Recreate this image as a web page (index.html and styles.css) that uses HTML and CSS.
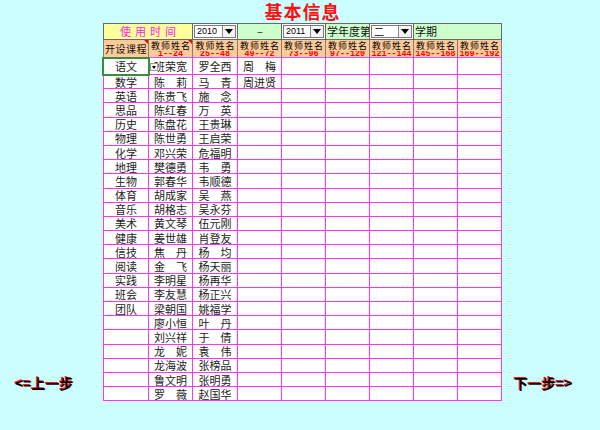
FILE: index.html
```html
<!DOCTYPE html>
<html lang="zh-CN">
<head>
<meta charset="utf-8">
<title>基本信息</title>
<link rel="stylesheet" href="styles.css">
</head>
<body>
<div class="page">
  <div class="side side-left"><span class="nav">&lt;=上一步</span></div>
  <div class="main">
    <h1 class="title">基本信息</h1>
    <div class="sheet">
      <div class="row top">
        <div class="yellow span2">使用时间</div>
        <div class="dd"><span class="ddbox"><span class="ddval">2010</span><span class="ddbtn"></span></span></div>
        <div class="green center">–</div>
        <div class="dd"><span class="ddbox"><span class="ddval">2011</span><span class="ddbtn"></span></span></div>
        <div class="green">学年度第</div>
        <div class="dd"><span class="ddbox"><span class="ddval cjk">二</span><span class="ddbtn"></span></span></div>
        <div class="green span2">学期</div>
      </div>
      <div class="row head">
        <div class="hc tri">开设课程</div>
        <div class="ht tri"><span>教师姓名</span><b>1--24</b></div>
        <div class="ht"><span>教师姓名</span><b>25--48</b></div>
        <div class="ht"><span>教师姓名</span><b>49--72</b></div>
        <div class="ht"><span>教师姓名</span><b>73--96</b></div>
        <div class="ht"><span>教师姓名</span><b>97--120</b></div>
        <div class="ht"><span>教师姓名</span><b>121--144</b></div>
        <div class="ht"><span>教师姓名</span><b>145--168</b></div>
        <div class="ht"><span>教师姓名</span><b>169--192</b></div>
      </div>
      <div class="row"><i class="sel">语文</i><i class="hasdd"><span class="minidd"></span>班荣宽</i><i>罗全西</i><i>周　梅</i><i></i><i></i><i></i><i></i><i></i></div>
      <div class="row"><i>数学</i><i>陈　莉</i><i>马　青</i><i>周进贤</i><i></i><i></i><i></i><i></i><i></i></div>
      <div class="row"><i>英语</i><i>陈贵飞</i><i>施　念</i><i></i><i></i><i></i><i></i><i></i><i></i></div>
      <div class="row"><i>思品</i><i>陈红春</i><i>万　英</i><i></i><i></i><i></i><i></i><i></i><i></i></div>
      <div class="row"><i>历史</i><i>陈盘花</i><i>王贵琳</i><i></i><i></i><i></i><i></i><i></i><i></i></div>
      <div class="row"><i>物理</i><i>陈世勇</i><i>王启荣</i><i></i><i></i><i></i><i></i><i></i><i></i></div>
      <div class="row"><i>化学</i><i>邓兴荣</i><i>危福明</i><i></i><i></i><i></i><i></i><i></i><i></i></div>
      <div class="row"><i>地理</i><i>樊德勇</i><i>韦　勇</i><i></i><i></i><i></i><i></i><i></i><i></i></div>
      <div class="row"><i>生物</i><i>郭春华</i><i>韦顺德</i><i></i><i></i><i></i><i></i><i></i><i></i></div>
      <div class="row"><i>体育</i><i>胡成家</i><i>吴　燕</i><i></i><i></i><i></i><i></i><i></i><i></i></div>
      <div class="row"><i>音乐</i><i>胡格志</i><i>吴永芬</i><i></i><i></i><i></i><i></i><i></i><i></i></div>
      <div class="row"><i>美术</i><i>黄文琴</i><i>伍元刚</i><i></i><i></i><i></i><i></i><i></i><i></i></div>
      <div class="row"><i>健康</i><i>姜世雄</i><i>肖登友</i><i></i><i></i><i></i><i></i><i></i><i></i></div>
      <div class="row"><i>信技</i><i>焦　丹</i><i>杨　均</i><i></i><i></i><i></i><i></i><i></i><i></i></div>
      <div class="row"><i>阅读</i><i>金　飞</i><i>杨天丽</i><i></i><i></i><i></i><i></i><i></i><i></i></div>
      <div class="row"><i>实践</i><i>李明星</i><i>杨再华</i><i></i><i></i><i></i><i></i><i></i><i></i></div>
      <div class="row"><i>班会</i><i>李友慧</i><i>杨正兴</i><i></i><i></i><i></i><i></i><i></i><i></i></div>
      <div class="row"><i>团队</i><i>梁朝国</i><i>姚福学</i><i></i><i></i><i></i><i></i><i></i><i></i></div>
      <div class="row"><i></i><i>廖小恒</i><i>叶　丹</i><i></i><i></i><i></i><i></i><i></i><i></i></div>
      <div class="row"><i></i><i>刘兴祥</i><i>于　倩</i><i></i><i></i><i></i><i></i><i></i><i></i></div>
      <div class="row"><i></i><i>龙　妮</i><i>袁　伟</i><i></i><i></i><i></i><i></i><i></i><i></i></div>
      <div class="row"><i></i><i>龙海波</i><i>张榜品</i><i></i><i></i><i></i><i></i><i></i><i></i></div>
      <div class="row"><i></i><i>鲁文明</i><i>张明勇</i><i></i><i></i><i></i><i></i><i></i><i></i></div>
      <div class="row"><i></i><i>罗　薇</i><i>赵国华</i><i></i><i></i><i></i><i></i><i></i><i></i></div>
    </div>
  </div>
  <div class="side side-right"><span class="nav">下一步=&gt;</span></div>
</div>
</body>
</html>
```

FILE: styles.css
```css
html, body {
  margin: 0;
  padding: 0;
  background: #ccffff;
}

body {
  font-family: "Noto Sans CJK SC", "Liberation Sans", sans-serif;
  width: 600px;
  height: 430px;
  overflow: hidden;
}

.page {
  display: grid;
  grid-template-columns: 103px 399px 1fr;
  height: 430px;
}

.side {
  display: flex;
  flex-direction: column;
  justify-content: flex-end;
  padding-bottom: 39px;
}

.side-left {
  padding-left: 15px;
}

.side-right {
  padding-left: 12px;
}

.nav {
  font-size: 14px;
  line-height: 16px;
  font-weight: bold;
  color: #000;
  text-shadow: -1px -1px 0 #ff1a1a;
}

.main {
  display: flex;
  flex-direction: column;
}

.title {
  margin: 0;
  height: 23px;
  padding-top: 1px;
  box-sizing: border-box;
  line-height: 21px;
  text-align: center;
  font-size: 18px;
  font-weight: bold;
  color: #ff1010;
  letter-spacing: 1px;
}

.sheet {
  display: grid;
  grid-template-columns: 46px 44px 45px repeat(6, 44px);
  grid-template-rows: 17px 18px 17px repeat(23, 14.2px);
}

.row {
  display: contents;
}

.row > * {
  box-sizing: border-box;
  position: relative;
  display: flex;
  align-items: center;
  justify-content: center;
  overflow: hidden;
  white-space: nowrap;
  font-style: normal;
}

/* top row */
.top > * {
  border-top: 1px solid #6a6a6a;
  border-right: 1px solid #6a6a6a;
  border-bottom: 1px solid #6a6a6a;
  font-size: 11px;
  line-height: 13px;
  color: #111;
}

.top > *:first-child {
  border-left: 1px solid #6a6a6a;
}

.span2 {
  grid-column: span 2;
}

.yellow {
  background: #ffff99;
  color: #ff22ee !important;
  letter-spacing: 4px;
  padding-left: 4px;
}

.green {
  background: #ccffcc;
  justify-content: flex-start !important;
  padding-left: 1px;
}

.green.center {
  justify-content: center !important;
}

.dd {
  background: #ffffff;
  padding: 0 1px;
}

.ddbox {
  flex: 1;
  height: 13px;
  box-sizing: border-box;
  border: 1px solid #7a7a7a;
  background: #fff;
  display: flex;
}

.ddval {
  flex: 1;
  font-family: "Liberation Sans", sans-serif;
  font-size: 9px;
  line-height: 11px;
  padding-left: 2px;
  color: #000;
}

.ddval.cjk {
  font-family: "Noto Sans CJK SC", sans-serif;
  font-size: 10px;
}

.ddbtn {
  width: 12px;
  border-left: 1px solid #8a8a8a;
  background: #f4f4f4;
  display: flex;
  align-items: center;
  justify-content: center;
}

.ddbtn::after {
  content: "";
  border-left: 4px solid transparent;
  border-right: 4px solid transparent;
  border-top: 5px solid #000;
}

/* header row */
.head > * {
  background: #ffcc99;
  border-right: 1px solid #7f7f7f;
  border-bottom: 1px solid #ff44ff;
}

.head > *:first-child {
  border-left: 1px solid #7f7f7f;
}

.hc {
  font-size: 10px;
  line-height: 12px;
  color: #111;
  letter-spacing: 0.5px;
}

.ht {
  flex-direction: column;
  justify-content: flex-start !important;
}

.ht span {
  flex-shrink: 0;
  font-size: 9px;
  line-height: 9px;
  height: 9px;
  letter-spacing: 1px;
  padding-left: 1px;
  color: #000;
  margin-top: 1px;
}

.ht b {
  flex-shrink: 0;
  display: block;
  overflow: hidden;
  font-family: "Liberation Mono", monospace;
  font-size: 8.4px;
  line-height: 6px;
  height: 6px;
  font-weight: bold;
  color: #ff0000;
  margin-top: 1px;
}

.tri::after {
  content: "";
  position: absolute;
  top: 0;
  right: 0;
  border-left: 4px solid transparent;
  border-top: 4px solid #ff0000;
}

/* data rows */
.row > i {
  background: #ffffff;
  border-right: 1px solid #ff33ff;
  border-bottom: 1px solid #ff33ff;
  font-size: 11px;
  line-height: 12px;
  color: #222;
}

.row > i:first-child {
  border-left: 1px solid #ff33ff;
}

.row > i.sel {
  outline: 2px solid #3d8b3d;
  outline-offset: -1px;
  z-index: 1;
}

.minidd {
  position: absolute;
  left: 1px;
  top: 5px;
  width: 8px;
  height: 8px;
  box-sizing: border-box;
  background: #fafafa;
  border: 1px solid #9a9a9a;
  display: flex;
  align-items: center;
  justify-content: center;
  z-index: 1;
}

.minidd::after {
  content: "";
  border-left: 2.5px solid transparent;
  border-right: 2.5px solid transparent;
  border-top: 3px solid #000;
}
```
